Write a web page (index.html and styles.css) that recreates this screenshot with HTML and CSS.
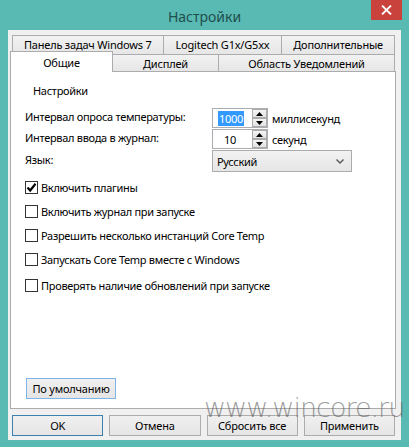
FILE: index.html
```html
<!DOCTYPE html>
<html lang="ru">
<head>
<meta charset="utf-8">
<title>Настройки</title>
<link rel="stylesheet" href="styles.css">
</head>
<body>
<div class="window">
  <div class="titlebar">
    <span class="title">Настройки</span>
    <div class="close">
      <svg width="11" height="10" viewBox="0 0 11 10"><path d="M1 0.5 L10 9.5 M10 0.5 L1 9.5" stroke="#fff" stroke-width="1.8" fill="none"/></svg>
    </div>
  </div>
  <div class="client">
    <div class="tabrow back">
      <div class="tab t1">Панель задач Windows 7</div>
      <div class="tab t2">Logitech G1x/G5xx</div>
      <div class="tab t3">Дополнительные</div>
    </div>
    <div class="tabrow front">
      <div class="tab active t4">Общие</div>
      <div class="tab t5">Дисплей</div>
      <div class="tab t6">Область Уведомлений</div>
    </div>
    <div class="panel">
      <div class="group-title">Настройки</div>
      <div class="form">
        <div class="label">Интервал опроса температуры:</div>
        <div class="ctrl">
          <div class="spin">
            <div class="val"><span class="sel">1000</span></div>
            <div class="arrows">
              <div class="arr"><svg width="7" height="4" viewBox="0 0 7 4"><path d="M0 4 L3.5 0 L7 4 Z" fill="#000"/></svg></div>
              <div class="arr"><svg width="7" height="4" viewBox="0 0 7 4"><path d="M0 0 L7 0 L3.5 4 Z" fill="#000"/></svg></div>
            </div>
          </div>
          <span class="unit">миллисекунд</span>
        </div>
        <div class="label">Интервал ввода в журнал:</div>
        <div class="ctrl">
          <div class="spin">
            <div class="val"><span class="plain">10</span></div>
            <div class="arrows">
              <div class="arr"><svg width="7" height="4" viewBox="0 0 7 4"><path d="M0 4 L3.5 0 L7 4 Z" fill="#000"/></svg></div>
              <div class="arr"><svg width="7" height="4" viewBox="0 0 7 4"><path d="M0 0 L7 0 L3.5 4 Z" fill="#000"/></svg></div>
            </div>
          </div>
          <span class="unit">секунд</span>
        </div>
        <div class="label">Язык:</div>
        <div class="ctrl">
          <div class="select">
            <span>Русский</span>
            <svg width="8" height="5" viewBox="0 0 8 5"><path d="M0.5 0.5 L4 4 L7.5 0.5" stroke="#555" stroke-width="1.4" fill="none"/></svg>
          </div>
        </div>
      </div>
      <div class="checks">
        <div class="check"><span class="box"><svg width="11" height="11" viewBox="0 0 11 11"><path d="M1.5 5.5 L4.2 8.5 L9.5 1.8" stroke="#000" stroke-width="2.2" fill="none"/></svg></span>Включить плагины</div>
        <div class="check"><span class="box"></span>Включить журнал при запуске</div>
        <div class="check"><span class="box"></span>Разрешить несколько инстанций Core Temp</div>
        <div class="check"><span class="box"></span>Запускать Core Temp вместе с Windows</div>
        <div class="check last"><span class="box"></span>Проверять наличие обновлений при запуске</div>
      </div>
      <button class="btn reset">По умолчанию</button>
    </div>
    <div class="actions">
      <button class="btn default">OK</button>
      <button class="btn">Отмена</button>
      <button class="btn">Сбросить все</button>
      <button class="btn">Применить</button>
    </div>
  </div>
  <div class="watermark">www.wincore.ru</div>
</div>
</body>
</html>
```
FILE: styles.css
```css
html, body {
  margin: 0;
  padding: 0;
}
body {
  background: #59bab4;
  font-family: "Noto Sans", "Open Sans", sans-serif;
  font-size: 11px;
  letter-spacing: -0.2px;
  color: #000;
}
.window {
  width: 409px;
  height: 447px;
  position: relative;
  display: flex;
  flex-direction: column;
}
.titlebar {
  height: 30px;
  display: grid;
  grid-template-columns: 1fr auto 1fr;
}
.title {
  grid-column: 2;
  align-self: start;
  margin-top: 7px;
  line-height: 20px;
  font-size: 14px;
  letter-spacing: 0;
  color: #1f4f4d;
}
.close {
  grid-column: 3;
  justify-self: end;
  align-self: start;
  width: 31px;
  height: 20px;
  margin-right: 7px;
  background: #c9433c;
  display: flex;
  align-items: center;
  justify-content: center;
}
.client {
  margin: 0 8px;
  height: 410px;
  box-sizing: border-box;
  background: #f0f0f0;
  padding: 5px 6px 0 2px;
  display: flex;
  flex-direction: column;
}
.tabrow {
  display: flex;
  align-items: flex-start;
}
.tabrow.back {
  margin-left: 2px;
}
.tab {
  box-sizing: border-box;
  border: 1px solid #acacac;
  border-bottom: none;
  background: linear-gradient(#f2f2f2, #e6e6e6);
  display: flex;
  align-items: center;
  justify-content: center;
  white-space: nowrap;
}
.tab + .tab {
  margin-left: -1px;
}
.back .tab {
  height: 19px;
  padding-bottom: 1px;
}
.front .tab {
  height: 17px;
}
.front .tab.active {
  height: 21px;
  margin-top: -3px;
  margin-bottom: -1px;
  background: #fff;
  position: relative;
  z-index: 2;
}
.t1 { width: 152px; }
.t2 { width: 120px; }
.t3 { width: 114px; }
.t4 { width: 103px; }
.t5 { width: 107px; }
.t6 { width: 177px; }
.panel {
  width: 386px;
  height: 338px;
  box-sizing: border-box;
  border: 1px solid #acacac;
  background: #fff;
  display: flex;
  flex-direction: column;
  letter-spacing: -0.3px;
}
.group-title {
  margin: 11px 0 0 22px;
  line-height: 16px;
}
.form {
  margin: 9px 0 0 14px;
  display: grid;
  grid-template-columns: 187px auto;
  row-gap: 1px;
  align-items: center;
}
.label {
  line-height: 16px;
  margin-top: -2px;
}
.ctrl {
  display: flex;
  align-items: center;
}
.spin {
  width: 56px;
  height: 20px;
  box-sizing: border-box;
  border: 1px solid #abadb3;
  background: #fff;
  display: flex;
}
.val {
  flex: 1;
  display: flex;
  align-items: center;
  padding-left: 5px;
}
.sel {
  background: #3399ff;
  color: #fff;
  line-height: 15px;
  padding: 0 1px;
}
.plain {
  padding-left: 6px;
}
.arrows {
  width: 15px;
  display: flex;
  flex-direction: column;
}
.arr {
  flex: 1;
  box-sizing: border-box;
  border: 1px solid #acacac;
  background: linear-gradient(#f4f4f4, #e2e2e2);
  display: flex;
  align-items: center;
  justify-content: center;
}
.unit {
  margin-left: 4px;
}
.select {
  width: 140px;
  height: 22px;
  box-sizing: border-box;
  border: 1px solid #acacac;
  background: linear-gradient(#f2f2f2, #e6e6e6);
  display: flex;
  align-items: center;
  justify-content: space-between;
  padding: 0 7px 0 4px;
}
.checks {
  margin: 3px 0 0 14px;
  display: flex;
  flex-direction: column;
}
.check {
  height: 24px;
  display: flex;
  align-items: center;
}
.check.last {
  margin-top: 2px;
}
.box {
  width: 13px;
  height: 13px;
  box-sizing: border-box;
  border: 1px solid #333;
  background: #fff;
  margin-right: 3px;
  display: flex;
  align-items: center;
  justify-content: center;
}
.btn {
  box-sizing: border-box;
  height: 21px;
  border: 1px solid #acacac;
  background: linear-gradient(#f0f0f0, #e5e5e5);
  font-family: inherit;
  font-size: 11px;
  letter-spacing: -0.2px;
  color: #000;
  padding: 0;
}
.reset {
  align-self: flex-start;
  width: 90px;
  margin: auto 0 9px 15px;
  border-color: #7eb4ea;
}
.actions {
  display: flex;
  gap: 6px;
  margin: 6px 0 0 2px;
}
.actions .btn {
  flex: 1;
}
.actions .btn.default {
  border-color: #3c7fb1;
}
.watermark {
  position: absolute;
  left: 204px;
  top: 388px;
  font-family: "DejaVu Sans", "Noto Sans", sans-serif;
  font-weight: 200;
  font-size: 27px;
  letter-spacing: -1px;
  color: rgba(90, 90, 90, 0.6);
  line-height: 40px;
  white-space: nowrap;
  pointer-events: none;
}
```
